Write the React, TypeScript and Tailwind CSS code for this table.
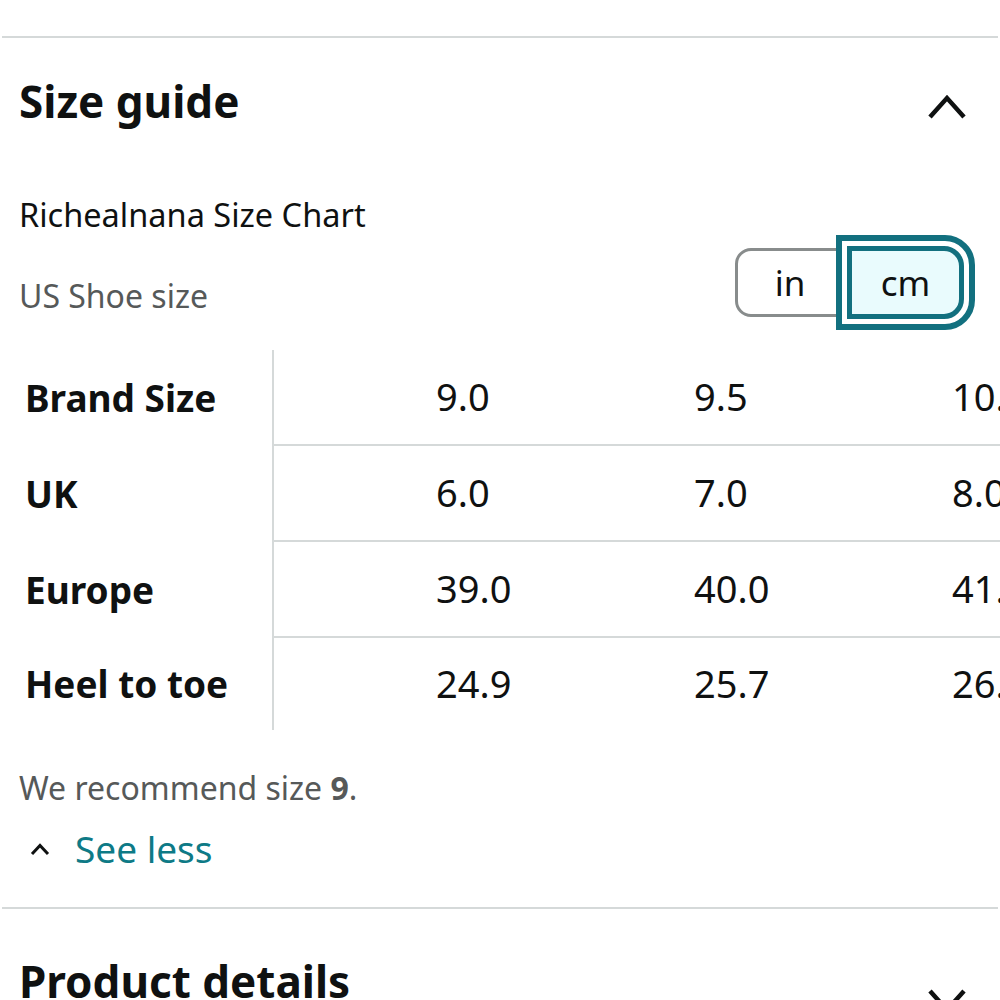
import { useState } from "react";

const rows = [
  { label: "Brand Size", values: ["9.0", "9.5", "10.0"] },
  { label: "UK", values: ["6.0", "7.0", "8.0"] },
  { label: "Europe", values: ["39.0", "40.0", "41.0"] },
  { label: "Heel to toe", values: ["24.9", "25.7", "26.5"] },
];

function Chevron({ up, className }: { up: boolean; className?: string }) {
  return (
    <svg width="42" height="28" viewBox="0 0 42 28" className={className}>
      <polyline
        points={up ? "4,24 21,5 38,24" : "4,4 21,23 38,4"}
        fill="none"
        stroke="#0f1111"
        strokeWidth="4.5"
      />
    </svg>
  );
}

export default function App() {
  const [unit, setUnit] = useState<"in" | "cm">("cm");

  return (
    <div
      className="w-[1000px] h-[1000px] overflow-hidden bg-white text-[#0f1111]"
      style={{ fontFamily: '"Noto Sans", sans-serif' }}
    >
      <div className="h-[36px]" />
      <div className="ml-[2px] mr-[2px] h-[2px] bg-[#d5d9d9]" />

      {/* Size guide header */}
      <div className="flex items-start justify-between pl-[19px] pr-[32px] pt-[37px]">
        <h2 className="text-[44px] leading-[1.2] font-bold">Size guide</h2>
        <Chevron up className="mt-[18px]" />
      </div>

      <div className="mt-[67px] pl-[19px] text-[32.5px] leading-[40px]">
        Richealnana Size Chart
      </div>

      {/* Unit row */}
      <div className="flex items-start justify-between pl-[19px] pr-[25px]">
        <div className="mt-[41px] text-[32px] leading-[40px] text-[#565959]">
          US Shoe size
        </div>
        <div className="flex items-center">
          <button
            onClick={() => setUnit("in")}
            className="w-[110px] h-[69px] rounded-l-[16px] border-[3px] border-[#888c8c] bg-white text-[35px] leading-none"
          >
            in
          </button>
          <div className="relative z-10 -ml-[9px] flex h-[95px] w-[139px] rounded-r-[30px] border-[6px] border-[#12707f] bg-white p-[5px]">
            <button
              onClick={() => setUnit("cm")}
              className="flex-1 rounded-r-[20px] border-[5px] border-[#12707f] bg-[#e9fbfd] text-[35px] leading-none"
            >
              cm
            </button>
          </div>
        </div>
      </div>

      {/* Size table */}
      <div className="mt-[20px] flex">
        <div className="w-[274px] shrink-0 border-r-2 border-[#d5d9d9]">
          {rows.map((row, i) => (
            <div
              key={row.label}
              className={`flex items-center pl-[25px] text-[37px] font-bold ${
                i < rows.length - 1 ? "h-[96px]" : "h-[92px]"
              }`}
            >
              {row.label}
            </div>
          ))}
        </div>
        <div className="flex-1">
          {rows.map((row, i) => (
            <div
              key={row.label}
              className={`flex w-[900px] ${
                i < rows.length - 1 ? "h-[96px] border-b-2 border-[#d5d9d9]" : "h-[92px]"
              }`}
            >
              {row.values.map((v) => (
                <div
                  key={v}
                  className="flex w-[258px] shrink-0 items-center pl-[162px] text-[38px] whitespace-nowrap"
                >
                  {v}
                </div>
              ))}
            </div>
          ))}
        </div>
      </div>

      <div className="mt-[38px] pl-[19px] text-[32px] leading-[40px] text-[#565959]">
        We recommend size <span className="font-bold">9</span>.
      </div>

      <div className="mt-[19px] flex items-center pl-[29px]">
        <svg width="22" height="16" viewBox="0 0 22 16">
          <polyline
            points="3,13 11,4.5 19,13"
            fill="none"
            stroke="#0f1111"
            strokeWidth="3"
          />
        </svg>
        <span className="ml-[24px] text-[37px] leading-[44px] text-[#0e7a86]">
          See less
        </span>
      </div>

      <div className="mt-[36px] ml-[2px] mr-[2px] h-[2px] bg-[#d5d9d9]" />

      {/* Product details header */}
      <div className="flex items-start justify-between pl-[19px] pr-[32px] pt-[46px]">
        <h2 className="text-[44px] leading-[1.2] font-bold">Product details</h2>
        <Chevron up={false} className="mt-[32px]" />
      </div>
    </div>
  );
}
